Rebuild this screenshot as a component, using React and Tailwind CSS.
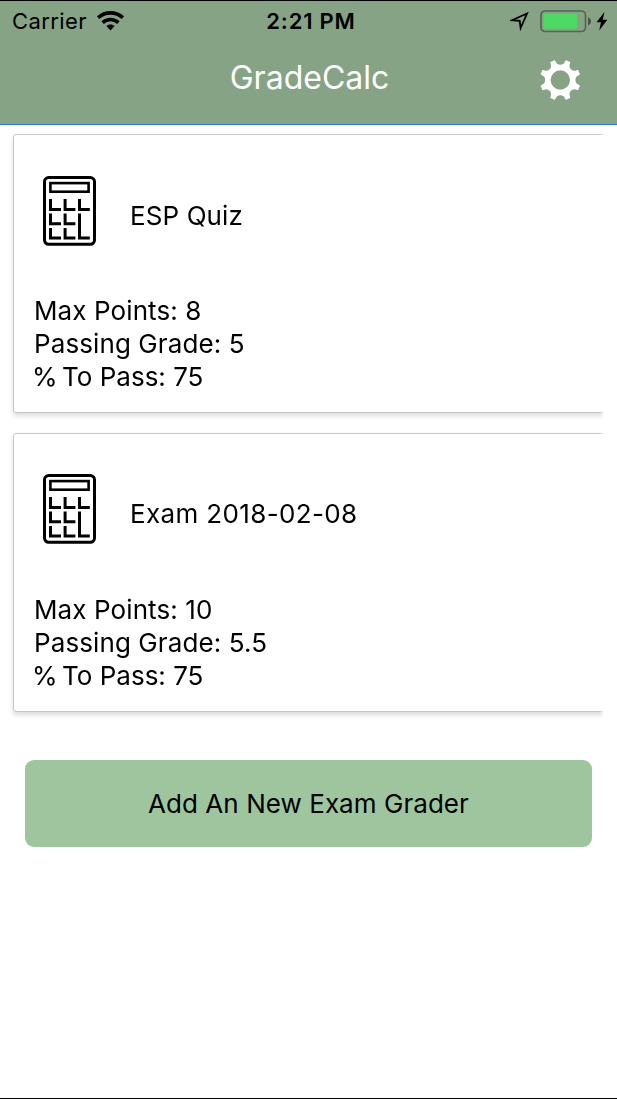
const graders = [
  {
    name: 'ESP Quiz', max: '8', passing: '5', percent: '75',
    heading: 'h-[151px]', details: 'pt-2', tracking: 'tracking-[0.1px]',
  },
  {
    name: 'Exam 2018-02-08', max: '10', passing: '5.5', percent: '75',
    heading: 'h-[149px]', details: 'pt-[10px]', tracking: 'tracking-[0.36px]',
  },
];

function gearPath() {
  const point = (r, deg) => {
    const a = (deg * Math.PI) / 180;
    return `${(20.3 + r * Math.cos(a)).toFixed(2)} ${(20 + r * Math.sin(a)).toFixed(2)}`;
  };
  let d = '';
  for (let i = 0; i < 8; i++) {
    const a = i * 45;
    d += `${i === 0 ? 'M' : 'L'}${point(19, a - 14.3)}`;
    d += `A5 5 0 0 0 ${point(19, a + 14.3)}`;
    d += `Q${point(20.4, a + 15)} ${point(20.6, a + 17.5)}`;
    d += `L${point(20.2, a + 22.5)}L${point(20.6, a + 27.5)}`;
    d += `Q${point(20.4, a + 30)} ${point(19, a + 30.7)}`;
  }
  return `${d}ZM20.3 10.3A9.7 9.7 0 1 0 20.3 29.7A9.7 9.7 0 1 0 20.3 10.3Z`;
}

function Gear() {
  return (
    <svg className="size-10" viewBox="0 0 40 40" fill="white" fillRule="evenodd">
      <path d={gearPath()} />
    </svg>
  );
}

function Wifi() {
  return (
    <svg className="h-5 w-[27px]" viewBox="0 0 27 20" fill="none" stroke="black" strokeWidth="3.6">
      <path d="M1.1 6.8C8.2 .2 18.8 .2 25.9 6.8" />
      <path d="M5.6 11.6C10.1 7.4 16.9 7.4 21.4 11.6" />
      <path d="M9.3 15.1C11.7 12.9 15.3 12.9 17.7 15.1L13.5 19.4Z" fill="black" stroke="none" />
    </svg>
  );
}

function Calculator() {
  return (
    <svg className="h-[70px] w-[53px] shrink-0" viewBox="0 0 53 70" fill="none" stroke="black" strokeWidth="3">
      <rect x="1.5" y="1.5" width="50" height="66.8" rx="4.2" />
      <rect x="7.4" y="7.1" width="38.2" height="8.6" strokeWidth="2.6" />
      <path d="M7.5 23V33.4H18M22.1 23V33.4H32.4M36.5 23V33.4H46.8" />
      <path d="M7.5 37.6V47.7H18M22.1 37.6V47.7H32.4M36.5 37.6V62H46.8" />
      <path d="M7.5 52V62H18M22.1 52V62H32.4" />
    </svg>
  );
}

function Card({ grader }) {
  return (
    <section className="h-[279px] w-[600px] rounded-[3px] border border-[#c6c6c8] bg-white shadow-[0_3px_5px_rgba(0,0,0,0.14)]">
      <div className={`flex items-center pl-[29px] ${grader.heading}`}>
        <Calculator />
        <h2 className={`ml-[34px] pt-[10px] leading-8 ${grader.tracking}`}>{grader.name}</h2>
      </div>
      <div className={`pl-5 leading-[33px] tracking-[0.1px] ${grader.details}`}>
        <p>Max Points: {grader.max}</p>
        <p>Passing Grade: {grader.passing}</p>
        <p className="tracking-[0px]">
          <span className="-ml-[2px] tracking-[-2.8px]">%</span> To Pass: {grader.percent}
        </p>
      </div>
    </section>
  );
}

export default function App() {
  return (
    <div className="flex h-[1099px] w-[617px] flex-col overflow-hidden border-y border-black bg-white font-['Inter',sans-serif] text-[26px] text-black">
      <header className="flex h-[124px] shrink-0 flex-col border-b border-[#2b74e2] bg-[#87a385]">
        <div className="grid h-10 grid-cols-3 items-center text-[22px] leading-10">
          <div className="flex items-center gap-[10px] pl-3">
            <span className="tracking-[0.4px]">Carrier</span>
            <Wifi />
          </div>
          <div className="pl-[5px] text-center font-semibold tracking-[0.8px]">2:21 PM</div>
          <div className="flex items-center justify-end pr-[9px]">
            <svg className="h-5 w-5" viewBox="0 0 20 20" fill="none" stroke="black" strokeWidth="1.8">
              <path d="M2 9.2L17 2.5L10.6 17L9.7 9.9Z" />
            </svg>
            <svg className="ml-[10px] h-[23px] w-[52px]" viewBox="0 0 52 23">
              <rect x="1" y="1" width="44.5" height="20.5" rx="4" fill="none" stroke="#546552" strokeWidth="1.7" />
              <rect x="3.5" y="3.7" width="33.5" height="15" rx="1" fill="#4cd964" />
              <path d="M48 7.2Q51 8.5 51 11.3T48 15.4Z" fill="#465544" />
            </svg>
            <svg className="ml-1 h-[19px] w-3" viewBox="0 0 12 19">
              <path d="M8.4 0L.5 10.2H5L3.2 18.5L11.3 7.8H6.8Z" />
            </svg>
          </div>
        </div>
        <div className="grid h-[83px] grid-cols-3">
          <h1 className="col-start-2 pt-[17px] pl-[2px] text-center text-[32px] leading-10 text-white">GradeCalc</h1>
          <button className="mt-[19px] mr-[37px] size-10 justify-self-end" aria-label="Settings">
            <Gear />
          </button>
        </div>
      </header>
      <main className="flex flex-col">
        <div className="flex w-[604px] flex-col gap-5 overflow-hidden pt-[9px] pb-5 pl-[13px] [mask-image:linear-gradient(to_right,black_calc(100%-4px),transparent)]">
          {graders.map((grader) => (
            <Card key={grader.name} grader={grader} />
          ))}
        </div>
        <button className="mx-[25px] mt-7 h-[87px] rounded-[9px] bg-[#9fc59f] leading-8 tracking-[0.05px]">Add An New Exam Grader</button>
      </main>
    </div>
  );
}
